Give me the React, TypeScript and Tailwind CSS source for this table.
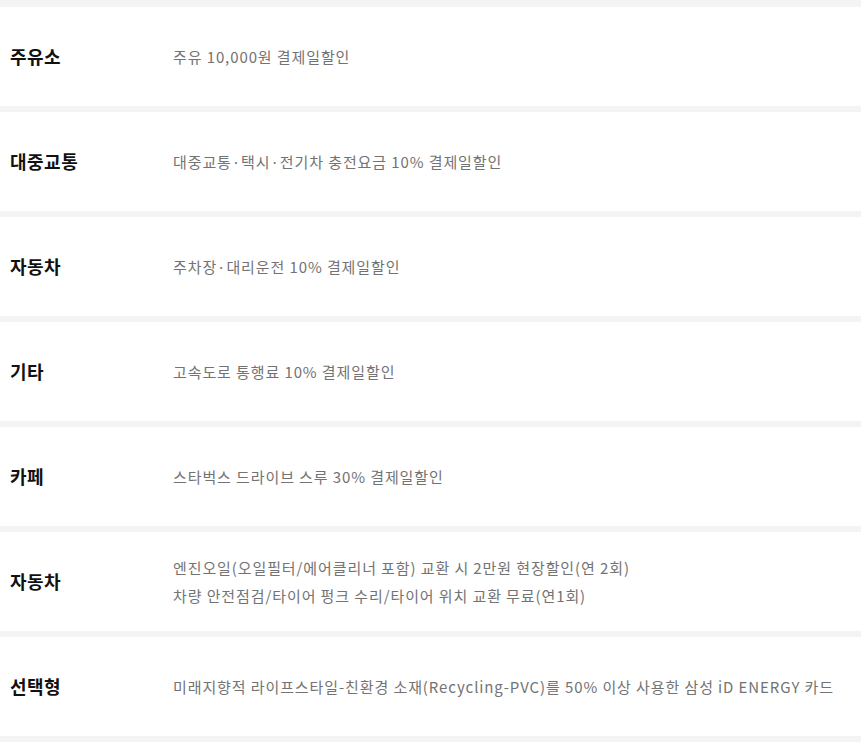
import React from 'react'

interface Benefit {
  label: string
  lines: string[]
}

const benefits: Benefit[] = [
  { label: '주유소', lines: ['주유 10,000원 결제일할인'] },
  { label: '대중교통', lines: ['대중교통·택시·전기차 충전요금 10% 결제일할인'] },
  { label: '자동차', lines: ['주차장·대리운전 10% 결제일할인'] },
  { label: '기타', lines: ['고속도로 통행료 10% 결제일할인'] },
  { label: '카페', lines: ['스타벅스 드라이브 스루 30% 결제일할인'] },
  {
    label: '자동차',
    lines: [
      '엔진오일(오일필터/에어클리너 포함) 교환 시 2만원 현장할인(연 2회)',
      '차량 안전점검/타이어 펑크 수리/타이어 위치 교환 무료(연1회)',
    ],
  },
  {
    label: '선택형',
    lines: ['미래지향적 라이프스타일-친환경 소재(Recycling-PVC)를 50% 이상 사용한 삼성 iD ENERGY 카드'],
  },
]

const App: React.FC = () => {
  return (
    <div
      className="w-[861px] min-h-[746px] bg-white overflow-hidden"
      style={{ fontFamily: '"Noto Sans CJK KR", "Noto Sans", sans-serif' }}
    >
      <div className="h-[7px] bg-[#f4f4f4]" />
      {benefits.map((item, i) => (
        <div key={i}>
          <div className="flex items-center h-[99px] pl-[10px]">
            <div className="w-[163px] shrink-0 text-[18px] tracking-[0.5px] font-bold text-[#111]">{item.label}</div>
            <div className="flex flex-col text-[15px] tracking-[0.9px] leading-[28px] text-[#737373] whitespace-nowrap">
              {item.lines.map((line, j) => (
                <p key={j}>{line}</p>
              ))}
            </div>
          </div>
          <div className="h-[6px] bg-[#f4f4f4]" />
        </div>
      ))}
    </div>
  )
}
export default App
